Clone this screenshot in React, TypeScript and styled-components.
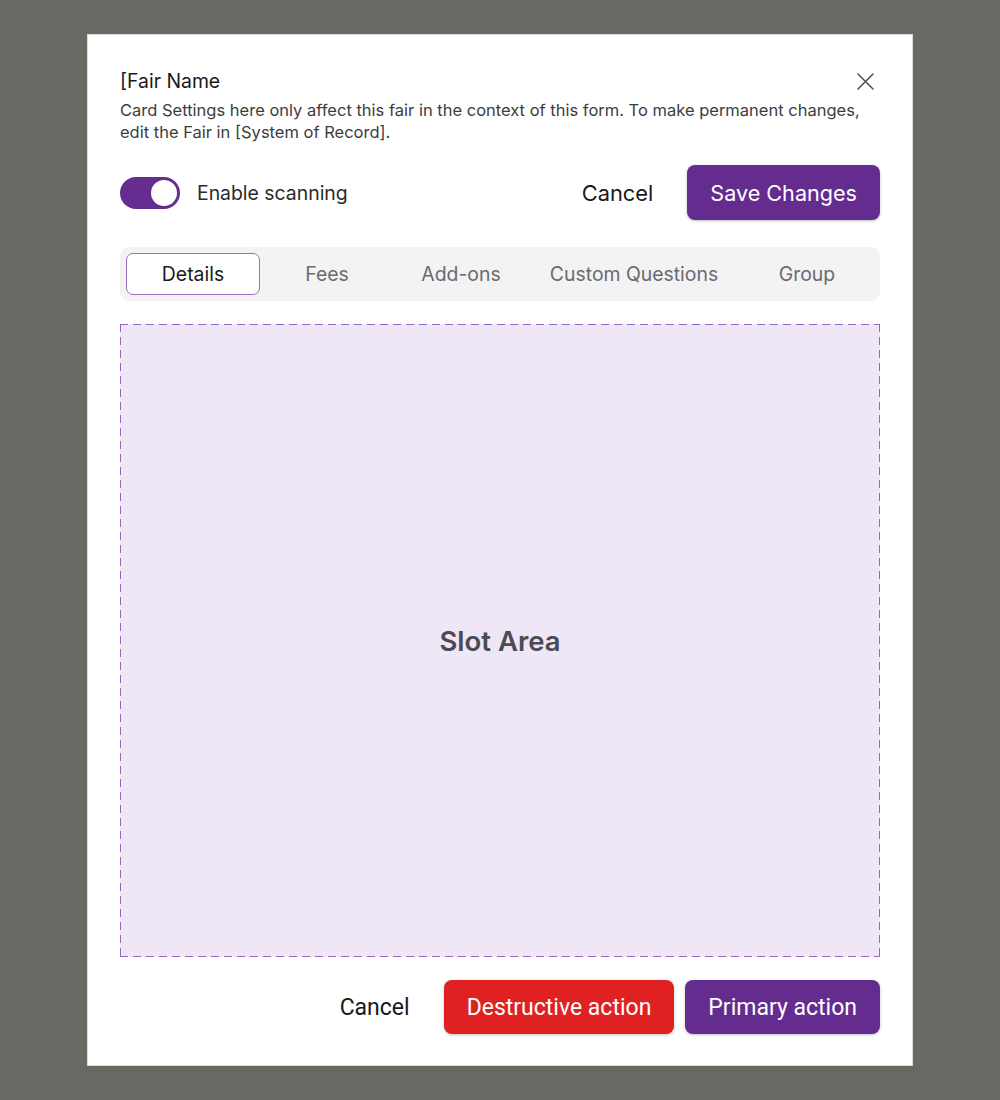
import React, { useState } from 'react';
import styled, { createGlobalStyle } from 'styled-components';

const GlobalStyle = createGlobalStyle`
  html, body {
    margin: 0;
    padding: 0;
    background: #676a62;
  }
  body {
    font-family: Inter, "Noto Sans", sans-serif;
    -webkit-font-smoothing: antialiased;
  }
`;

const Page = styled.div`
  width: 1000px;
  height: 1100px;
  padding-top: 34px;
  box-sizing: border-box;
  display: flex;
  justify-content: center;
  align-items: flex-start;
`;

const Modal = styled.div`
  width: 826px;
  height: 1032px;
  box-sizing: border-box;
  background: #fff;
  border: 1px solid #dcdcdc;
  padding: 33px 32px 31px 32px;
  display: flex;
  flex-direction: column;
`;

const Header = styled.div`
  display: flex;
  justify-content: space-between;
  align-items: flex-start;
`;

const Title = styled.h2`
  margin: 0;
  font-size: 19.4px;
  font-weight: 400;
  line-height: 26px;
  color: #1a1a1a;
`;

const CloseButton = styled.button`
  border: 0;
  background: none;
  padding: 0;
  margin-top: 3px;
  margin-right: 5px;
  width: 20px;
  height: 20px;
  display: flex;
  align-items: center;
  justify-content: center;
  cursor: pointer;
`;

const Description = styled.p`
  margin: 5px 0 0 0;
  font-size: 16.5px;
  line-height: 22px;
  color: #3d3d3d;
`;

const ControlRow = styled.div`
  margin-top: 22px;
  display: flex;
  align-items: center;
  justify-content: space-between;
`;

const ToggleLabel = styled.label`
  display: flex;
  align-items: center;
  gap: 17px;
  font-size: 19.4px;
  color: #2a2a2a;
  cursor: pointer;
`;

const Track = styled.span<{ $on: boolean }>`
  width: 60px;
  height: 32px;
  border-radius: 16px;
  box-sizing: border-box;
  background: ${p => (p.$on ? '#642d8f' : '#c8c8c8')};
  display: flex;
  align-items: center;
  justify-content: ${p => (p.$on ? 'flex-end' : 'flex-start')};
  padding: 0 3px;
`;

const Knob = styled.span`
  width: 26px;
  height: 26px;
  border-radius: 50%;
  background: #fff;
`;

const Actions = styled.div`
  display: flex;
  align-items: center;
  gap: 11px;
`;

const TextButton = styled.button<{ $font?: string; $size: number }>`
  border: 0;
  background: none;
  font-family: ${p => p.$font || 'Inter'}, sans-serif;
  font-size: ${p => p.$size}px;
  color: #1a1a1a;
  padding: 0 23px;
  height: 54px;
  cursor: pointer;
`;

const FilledButton = styled.button<{ $tone: 'primary' | 'danger'; $font?: string; $size: number; $h: number }>`
  border: 0;
  border-radius: 8px;
  height: ${p => p.$h}px;
  padding: 0 23px;
  font-family: ${p => p.$font || 'Inter'}, sans-serif;
  font-size: ${p => p.$size}px;
  color: #fff;
  background: ${p => (p.$tone === 'primary' ? '#652c90' : '#e02121')};
  box-shadow: 0 1px 3px rgba(0, 0, 0, 0.25);
  cursor: pointer;
`;

const TabBar = styled.div`
  margin-top: 27px;
  height: 54px;
  box-sizing: border-box;
  padding: 6px;
  background: #f3f3f3;
  border-radius: 9px;
  display: grid;
  grid-template-columns: 134px 134px 134px 212px 1fr;
`;

const Tab = styled.button<{ $active: boolean }>`
  border: 1px solid ${p => (p.$active ? '#9c6fc2' : 'transparent')};
  border-radius: 7px;
  background: ${p => (p.$active ? '#fff' : 'transparent')};
  font-family: Inter, sans-serif;
  font-size: 19.4px;
  color: ${p => (p.$active ? '#1a1a1a' : '#6a6a72')};
  cursor: pointer;
  padding: 0;
`;

const SlotArea = styled.div`
  margin-top: 23px;
  flex: 1;
  background-color: #efe6f6;
  background-image:
    repeating-linear-gradient(90deg, #9a65c4 0 8px, transparent 8px 13px),
    repeating-linear-gradient(90deg, #9a65c4 0 8px, transparent 8px 13px),
    repeating-linear-gradient(180deg, #9a65c4 0 8px, transparent 8px 13px),
    repeating-linear-gradient(180deg, #9a65c4 0 8px, transparent 8px 13px);
  background-size: 100% 1px, 100% 1px, 1px 100%, 1px 100%;
  background-position: 0 0, 0 100%, 0 0, 100% 0;
  background-repeat: no-repeat;
  display: flex;
  align-items: center;
  justify-content: center;
  font-size: 27.5px;
  font-weight: 600;
  color: #4b4a57;
`;

const Footer = styled.div`
  margin-top: 23px;
  display: flex;
  justify-content: flex-end;
  align-items: center;
  gap: 11px;
`;

const tabs = ['Details', 'Fees', 'Add-ons', 'Custom Questions', 'Group'];

const CloseIcon = () => (
  <svg width="17" height="17" viewBox="0 0 17 17" fill="none">
    <path d="M1 1 L16 16 M16 1 L1 16" stroke="#555" strokeWidth="1.6" strokeLinecap="round" />
  </svg>
);

const App: React.FC = () => {
  const [scanning, setScanning] = useState(true);
  const [active, setActive] = useState('Details');

  return (
    <Page>
      <GlobalStyle />
      <Modal>
        <Header>
          <Title>[Fair Name</Title>
          <CloseButton aria-label="Close">
            <CloseIcon />
          </CloseButton>
        </Header>
        <Description>
          Card Settings here only affect this fair in the context of this form. To make permanent changes,
          <br />
          edit the Fair in [System of Record].
        </Description>

        <ControlRow>
          <ToggleLabel onClick={() => setScanning(!scanning)}>
            <Track $on={scanning}>
              <Knob />
            </Track>
            Enable scanning
          </ToggleLabel>
          <Actions>
            <TextButton $size={21.8}>Cancel</TextButton>
            <FilledButton $tone="primary" $size={21.6} $h={55}>Save Changes</FilledButton>
          </Actions>
        </ControlRow>

        <TabBar>
          {tabs.map(t => (
            <Tab key={t} $active={t === active} onClick={() => setActive(t)}>
              {t}
            </Tab>
          ))}
        </TabBar>

        <SlotArea>Slot Area</SlotArea>

        <Footer>
          <TextButton $font="Roboto" $size={23}>Cancel</TextButton>
          <FilledButton $tone="danger" $font="Roboto" $size={23} $h={54}>Destructive action</FilledButton>
          <FilledButton $tone="primary" $font="Roboto" $size={23} $h={54}>Primary action</FilledButton>
        </Footer>
      </Modal>
    </Page>
  );
};

export default App;
